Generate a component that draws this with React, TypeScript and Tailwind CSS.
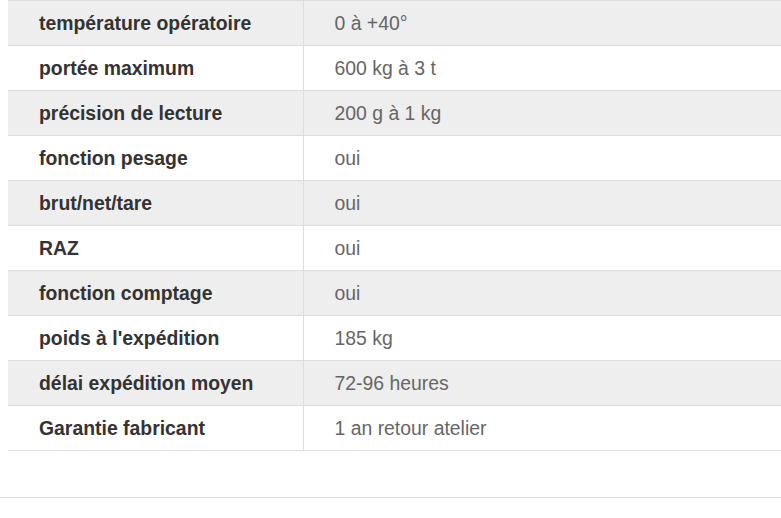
const rows: [string, string][] = [
  ['température opératoire', '0 à +40°'],
  ['portée maximum', '600 kg à 3 t'],
  ['précision de lecture', '200 g à 1 kg'],
  ['fonction pesage', 'oui'],
  ['brut/net/tare', 'oui'],
  ['RAZ', 'oui'],
  ['fonction comptage', 'oui'],
  ["poids à l'expédition", '185 kg'],
  ['délai expédition moyen', '72-96 heures'],
  ['Garantie fabricant', '1 an retour atelier'],
];

export default function App() {
  return (
    <div className="w-[781px] h-[518px] overflow-hidden bg-white font-['Liberation_Sans',Arial,sans-serif]">
      <div className="pl-2">
        <table className="w-[800px] border-collapse">
          <tbody>
            {rows.map(([label, value], i) => (
              <tr key={label} className={`border-t border-b border-[#dddddd] ${i % 2 === 0 ? 'bg-[#eeeeee]' : 'bg-white'}`}>
                <td className="w-[295px] h-[45px] pl-[31px] pt-[2px] border-r border-[#dddddd] text-[19.4px] font-bold text-[#333333]">
                  {label}
                </td>
                <td className="h-[45px] pl-[31px] pt-[2px] text-[19.4px] text-[#666666]">{value}</td>
              </tr>
            ))}
          </tbody>
        </table>
      </div>
      <div className="mt-[46px] border-t border-[#dddddd]" />
    </div>
  );
}
